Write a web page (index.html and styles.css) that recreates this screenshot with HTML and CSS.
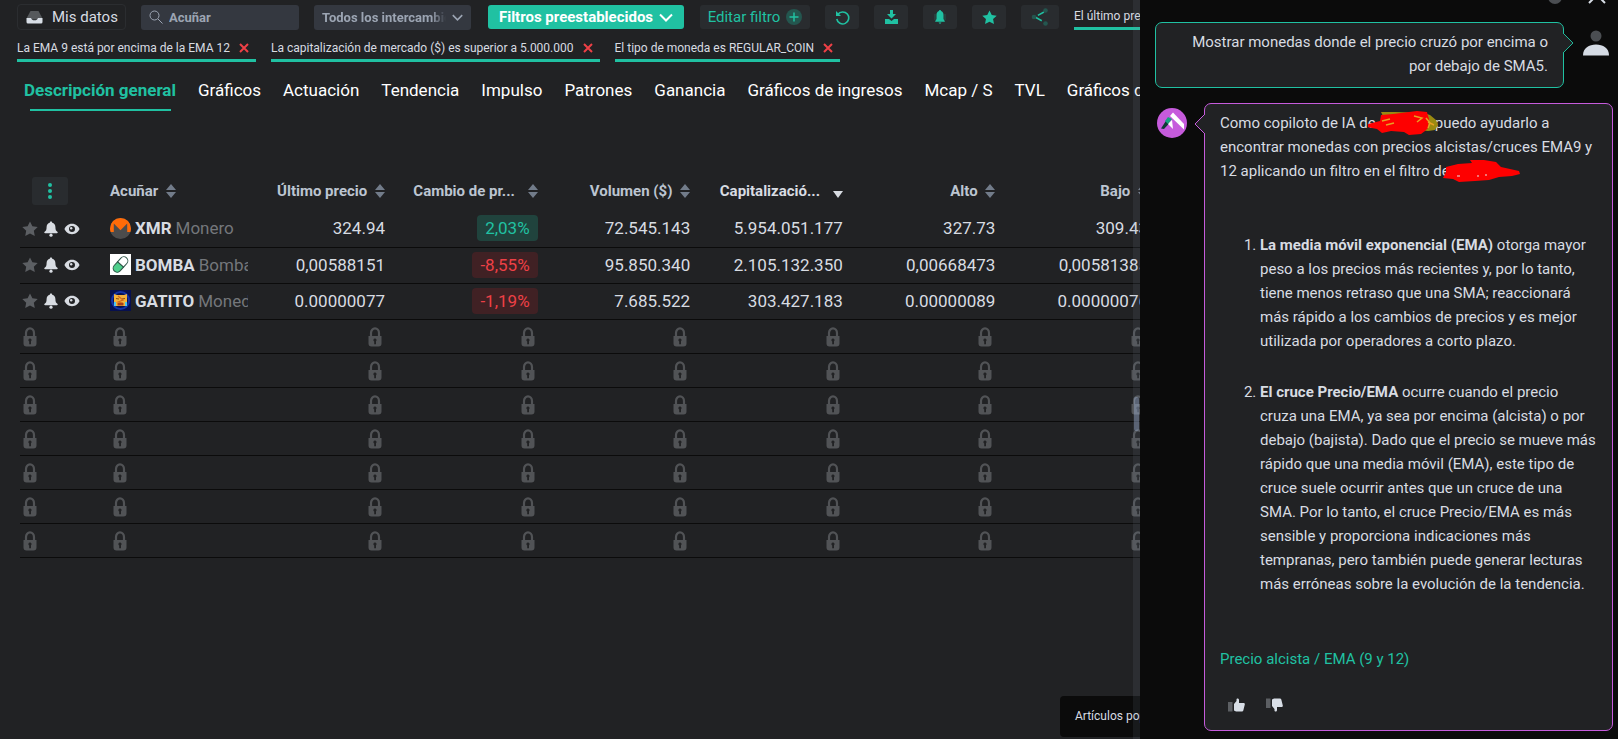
FILE: index.html
```
<!DOCTYPE html>
<html lang="es">
<head>
  <meta charset="UTF-8" />
  <meta name="viewport" content="width=device-width, initial-scale=1.0"/>
  <title>Filtro de criptomonedas</title>
  <link rel="stylesheet" href="styles.css">
</head>
<body>

  <!-- Shared icons -->
  <svg class="sprite" aria-hidden="true">
    <symbol id="i-x" viewBox="0 0 10 10"><path d="M1 1l8 8M9 1l-8 8" stroke="currentColor" stroke-width="2" fill="none"/></symbol>
    <symbol id="i-down" viewBox="0 0 14 8"><path d="M1 1l6 6 6-6" stroke="currentColor" stroke-width="2" fill="none"/></symbol>
    <symbol id="i-star" viewBox="0 0 16 16"><path d="M8 .5l2.400 4.800 5.300.7-3.900 3.700 1 5.300L8 12.400 3.200 15l1-5.300L.3 6l5.300-.7z" fill="currentColor"/></symbol>
    <symbol id="i-bell" viewBox="0 0 14 16"><path d="M7 0.500c.8 0 1.200.5 1.200 1.200 2 .5 3.200 2.200 3.200 4.300 0 3 .6 3.800 2 4.800.6.500.4 1.400-.5 1.400H1.100c-.9 0-1.100-.9-.5-1.400 1.400-1 2-1.800 2-4.800 0-2.100 1.200-3.800 3.200-4.300C5.800 1 6.200.5 7 .5z" fill="currentColor"/><circle cx="7" cy="14.200" r="1.600" fill="currentColor"/></symbol>
    <symbol id="i-eye" viewBox="0 0 16 12"><path d="M8 .8C4 .8 1.500 3.500.5 6c1 2.500 3.500 5.200 7.500 5.200s6.500-2.700 7.500-5.200C14.500 3.500 12 .8 8 .8zM8 9a3 3 0 1 1 0-6 3 3 0 0 1 0 6z" fill="currentColor" fill-rule="evenodd"/><circle cx="7.200" cy="5.200" r="1.200" fill="currentColor"/></symbol>
    <symbol id="i-sort" viewBox="0 0 10 14"><path d="M5 0l5 6H0zM5 14l5-6H0z" fill="currentColor"/></symbol>
    <symbol id="i-lock" viewBox="0 0 14 20"><path d="M3 10V6a4 4.700 0 0 1 8 0v4" stroke="currentColor" stroke-width="2.200" fill="none"/><path d="M.5 9h13v7.500a3 3 0 0 1-3 3h-7a3 3 0 0 1-3-3zM7 11.500a1.600 1.600 0 0 0-.8 3v2.800h1.800v-3a1.600 1.600 0 0 0-1-2.800z" fill="currentColor" fill-rule="evenodd"/></symbol>
  </svg>

  <main class="screener">
    <div class="toolbar">
      <button class="my-data">
        <svg width="17" height="14" viewBox="0 0 17 14"><path d="M4.500 1h8L16 7.500v2H1v-2z" fill="#56595c"/><path d="M.5 8H5c.6 1.500 1.500 2.300 3.500 2.300S11.400 9.500 12 8h4.500v4a1.500 1.500 0 0 1-1.500 1.500H2A1.500 1.500 0 0 1 .5 12z" fill="#d8dee6"/></svg>
        Mis datos
      </button>
      <label class="search">
        <svg width="14" height="14" viewBox="0 0 14 14"><circle cx="5.500" cy="5.500" r="4.500" stroke="currentColor" fill="none"/><path d="M9 9l4.500 4.500" stroke="currentColor"/></svg>
        <input type="text" placeholder="Acuñar" aria-label="Acuñar">
      </label>
      <div class="exchange">
        <select aria-label="Intercambios"><option>Todos los intercambios</option></select>
        <svg width="11" height="7"><use href="#i-down"/></svg>
      </div>
      <button class="preset">Filtros preestablecidos <svg width="14" height="9"><use href="#i-down"/></svg></button>
      <button class="tool edit">Editar filtro
        <svg width="16" height="16" viewBox="0 0 16 16"><circle cx="8" cy="8" r="8" fill="#24564f"/><path d="M8 3.500v9M3.500 8h9" stroke="currentColor" stroke-width="1.500"/></svg>
      </button>
      <button class="tool" aria-label="Restablecer"><svg width="15" height="15" viewBox="0 0 15 15"><path d="M2.800 4.500A6 6 0 1 1 1.800 9" stroke="currentColor" stroke-width="1.600" fill="none"/><path d="M1 1v5h5z" fill="currentColor"/></svg></button>
      <button class="tool" aria-label="Descargar"><svg width="13" height="14" viewBox="0 0 13 14"><path d="M5 0h3v4h3L6.500 8.500 2 4h3z" fill="currentColor"/><path d="M0 9h4l2.500 2L9 9h4v5H0z" fill="currentColor"/></svg></button>
      <button class="tool" aria-label="Alertas"><svg width="12" height="14" viewBox="0 0 12 14"><path d="M6 0c.6 0 1 .5 1 1 1.600.5 2.500 2 2.500 4v4l1.300 2.200v.6H1.200v-.6L2.500 9V5c0-2 .9-3.500 2.500-4 0-.5.400-1 1-1z" fill="currentColor"/><path d="M1 4v6M11 4v6" stroke="#24564f"/><path d="M4.500 12.500h3L6 14z" fill="currentColor"/></svg></button>
      <button class="tool" aria-label="Favoritos"><svg width="15" height="15"><use href="#i-star"/></svg></button>
      <button class="tool share" aria-label="Compartir"><svg width="18" height="18" viewBox="0 0 18 18"><path d="M13 4L4 9l9 5" stroke="currentColor" stroke-width="1.500" stroke-dasharray="7 3 8" fill="none"/><g fill="#24564f"><circle cx="3" cy="9" r="2.300"/><circle cx="14.500" cy="2.500" r="2.300"/><circle cx="14.500" cy="15.500" r="2.300"/></g></svg></button>
      <div class="chip chip-top">El último precio</div>
    </div>

    <div class="chips">
      <div class="chip">La EMA 9 está por encima de la EMA 12 <button aria-label="Quitar"><svg width="10" height="10"><use href="#i-x"/></svg></button></div>
      <div class="chip">La capitalización de mercado ($) es superior a 5.000.000 <button aria-label="Quitar"><svg width="10" height="10"><use href="#i-x"/></svg></button></div>
      <div class="chip">El tipo de moneda es REGULAR_COIN <button aria-label="Quitar"><svg width="10" height="10"><use href="#i-x"/></svg></button></div>
    </div>

    <nav class="tabs">
      <a href="#" class="active">Descripción general</a>
      <a href="#">Gráficos</a>
      <a href="#">Actuación</a>
      <a href="#">Tendencia</a>
      <a href="#">Impulso</a>
      <a href="#">Patrones</a>
      <a href="#">Ganancia</a>
      <a href="#">Gráficos de ingresos</a>
      <a href="#">Mcap / S</a>
      <a href="#">TVL</a>
      <a href="#">Gráficos de</a>
    </nav>

    <div class="table-wrap">
      <table>
        <colgroup><col class="col-actions"><col class="col-coin"><col class="col-price"><col><col><col><col><col></colgroup>
        <thead>
          <tr>
            <th><button class="menu" aria-label="Columnas"><svg width="4" height="16" viewBox="0 0 4 16" fill="currentColor"><circle cx="2" cy="2" r="2"/><circle cx="2" cy="8" r="2"/><circle cx="2" cy="14" r="2"/></svg></button></th>
            <th class="left">Acuñar <svg width="10" height="14"><use href="#i-sort"/></svg></th>
            <th>Último precio <svg width="10" height="14"><use href="#i-sort"/></svg></th>
            <th class="cut">Cambio de pr... <svg width="10" height="14"><use href="#i-sort"/></svg></th>
            <th>Volumen ($) <svg width="10" height="14"><use href="#i-sort"/></svg></th>
            <th class="cut sorted">Capitalizació... <svg width="10" height="14" viewBox="0 0 10 14"><path d="M0 7h10l-5 7z" fill="currentColor"/></svg></th>
            <th>Alto <svg width="10" height="14"><use href="#i-sort"/></svg></th>
            <th>Bajo <svg width="10" height="14"><use href="#i-sort"/></svg></th>
          </tr>
        </thead>
        <tbody id="rows">
          <tr>
            <td><div class="actions"><svg class="dim" width="16" height="16"><use href="#i-star"/></svg><svg width="14" height="16"><use href="#i-bell"/></svg><svg width="16" height="12"><use href="#i-eye"/></svg></div></td>
            <td><div class="coin">
              <svg width="21" height="21" viewBox="0 0 21 21"><circle cx="10.500" cy="10.500" r="10.500" fill="#4c4c4c"/><path d="M0 10.500a10.500 10.500 0 0 1 21 0 11 11 0 0 1-.6 3.500h-3.200V5.500l-6.700 6.700-6.700-6.700V14H.6A11 11 0 0 1 0 10.500z" fill="#ff6b08"/></svg>
              <b>XMR</b> <span>Monero</span></div></td>
            <td>324.94</td>
            <td><span class="badge up">2,03%</span></td>
            <td>72.545.143</td>
            <td>5.954.051.177</td>
            <td>327.73</td>
            <td>309.43</td>
          </tr>
          <tr>
            <td><div class="actions"><svg class="dim" width="16" height="16"><use href="#i-star"/></svg><svg width="14" height="16"><use href="#i-bell"/></svg><svg width="16" height="12"><use href="#i-eye"/></svg></div></td>
            <td><div class="coin">
              <svg width="21" height="21" viewBox="0 0 21 21"><path d="M0 0h21v21H0z" fill="#fff"/><g transform="rotate(42 10.500 10.500)" stroke="#2f5548"><path d="M6.500 10.500v-5a4 4 0 0 1 8 0v5z" fill="#fff"/><path d="M6.500 10.500v5a4 4 0 0 0 8 0v-5z" fill="#4fcf8c"/></g></svg>
              <b>BOMBA</b> <span>Bomba</span></div></td>
            <td>0,00588151</td>
            <td><span class="badge down">-8,55%</span></td>
            <td>95.850.340</td>
            <td>2.105.132.350</td>
            <td>0,00668473</td>
            <td>0,00581385</td>
          </tr>
          <tr>
            <td><div class="actions"><svg class="dim" width="16" height="16"><use href="#i-star"/></svg><svg width="14" height="16"><use href="#i-bell"/></svg><svg width="16" height="12"><use href="#i-eye"/></svg></div></td>
            <td><div class="coin">
              <svg width="21" height="21" viewBox="0 0 21 21"><path d="M0 0h21v21H0z" fill="#07104f"/><circle cx="10.500" cy="10.500" r="8.500" fill="none" stroke="#1433a8" stroke-width="2"/><path d="M4 4l3 1h7l3-1v8l-1.500 4h-10L4 12z" fill="#f3b13c"/><path d="M6 8.500l3 .5M15 8.500l-3 .5" stroke="#8a4a12" stroke-width="1.200"/><path d="M8 6l5 4-5 2 5 1" stroke="#d4661c" stroke-width="1.200" fill="none"/><path d="M7.500 13h6v2.500h-6z" fill="#a8401b"/><path d="M4 12h2v4H4zM15 12h2v4h-2z" fill="#4fc4ec"/></svg>
              <b>GATITO</b> <span>Moneda</span></div></td>
            <td>0.00000077</td>
            <td><span class="badge down">-1,19%</span></td>
            <td>7.685.522</td>
            <td>303.427.183</td>
            <td>0.00000089</td>
            <td>0.00000076</td>
          </tr>
        </tbody>
      </table>
    </div>

    <div class="popular">Artículos populares</div>
    <div class="resizer"><span></span></div>
  </main>

  <aside class="chat">
    <div class="chat-top">
      <svg width="14" height="14" viewBox="0 0 14 14"><circle cx="7" cy="7" r="7" fill="#4b4e52"/></svg>
      <svg width="18" height="18" viewBox="0 0 18 18"><path d="M1 1l16 16M17 1L1 17" stroke="#d8dee6" stroke-width="2"/></svg>
    </div>

    <div class="message user">
      <div class="bubble">
        <p>Mostrar monedas donde el precio cruzó por encima o por debajo de SMA5.</p>
        <svg class="tip" width="11" height="20" viewBox="0 0 11 20"><path d="M0 0l10 10L0 20" fill="#212224" stroke="#20b899"/></svg>
      </div>
      <svg class="avatar" width="26" height="26" viewBox="0 0 26 26"><circle cx="13" cy="6" r="5.500" fill="#4b4e52"/><path d="M0 25.500C0 18 6 14.500 13 14.500s13 3.500 13 11z" fill="#d5dbe4"/></svg>
    </div>

    <div class="message bot">
      <svg class="avatar" width="30" height="30" viewBox="0 0 30 30"><circle cx="15" cy="15" r="15" fill="#c65bdc"/><path d="M4 20.500L9.500 12l3 3-5.500 6z" fill="#0e3b34"/><path d="M8 13l3-4 4 2-4 5z" fill="#15a37f"/><path d="M11 16l4-4 1 9z" fill="#fff"/><path d="M13 8l3-3.500L27 16v5.500z" fill="#fff"/></svg>
      <div class="bubble">
        <svg class="tip" width="11" height="20" viewBox="0 0 11 20"><path d="M11 0L1 10l10 10" fill="#212224" stroke="#c65bdc"/></svg>
        <p>Como copiloto de IA de<span class="mark"><svg width="72" height="26" viewBox="0 0 72 26"><path d="M13 2h15l28 1 6 2 6 5 2 5-3 5-7 1-10-1-9 2-14-2-8-6z" fill="#9a8a10"/><path d="M0 14l12-3 1-6 12-1 24-3 10 1 1 4 1 3-1 9-2 2-1 1-4 3-12 1-5-3-13-1-9 2-5-4-11-2z" fill="#fe0000"/><path d="M46 6l8 2-5 4M58 8l4 5-2 5M60 12l6 3M14 11l8-2M18 15l8-2" stroke="#e8a022" stroke-width="1.500" fill="none"/></svg></span>puedo ayudarlo a encontrar monedas con precios alcistas/cruces EMA9 y 12 aplicando un filtro en el filtro de<span class="mark end"><svg width="78" height="24" viewBox="0 0 78 24"><path d="M1 19l3-6 0-5 12-3 14-1-2-3 14 0 12 2 5 5 18 4 1 3-8 2-13 1-10 3-14 1-16 1-6-3z" fill="#fe0000"/><path d="M35 17h2M43 16h2M15 17h3" stroke="#e6e6e6"/></svg></span></p>
        <ol>
          <li><b>La media móvil exponencial (EMA)</b> otorga mayor peso a los precios más recientes y, por lo tanto, tiene menos retraso que una SMA; reaccionará más rápido a los cambios de precios y es mejor utilizada por operadores a corto plazo.</li>
          <li><b>El cruce Precio/EMA</b> ocurre cuando el precio cruza una EMA, ya sea por encima (alcista) o por debajo (bajista). Dado que el precio se mueve más rápido que una media móvil (EMA), este tipo de cruce suele ocurrir antes que un cruce de una SMA. Por lo tanto, el cruce Precio/EMA es más sensible y proporciona indicaciones más tempranas, pero también puede generar lecturas más erróneas sobre la evolución de la tendencia.</li>
        </ol>
        <a href="#">Precio alcista / EMA (9 y 12)</a>
        <div class="votes">
          <button aria-label="Me gusta"><svg width="17" height="14" viewBox="0 0 17 14"><path d="M0 4h4.500v9.500H0z" fill="#5c5f63"/><path d="M6 6l2.500-3V1.500C8.500 0 11 0 11 2v3h4.500c1 0 1.500.7 1.300 1.500l-1.500 6c-.2.700-.6 1-1.300 1H8l-2-1z" fill="#d8dee6"/></svg></button>
          <button aria-label="No me gusta"><svg width="17" height="14" viewBox="0 0 17 14"><path d="M0 .5h4.500V10H0z" fill="#5c5f63"/><path d="M6 8l2.500 3v1.500c0 1.500 2.500 1.500 2.500-.5V9h4.500c1 0 1.500-.7 1.300-1.500l-1.500-6c-.2-.7-.6-1-1.300-1H8l-2 1z" fill="#d8dee6"/></svg></button>
        </div>
      </div>
    </div>
  </aside>

  <script>
    // Locked rows for the free plan
    const rows = document.getElementById('rows');
    const lock = '<td><svg class="lock" width="14" height="20"><use href="#i-lock"/></svg></td>';

    for (let i = 0; i < 7; i++) {
      const tr = document.createElement('tr');
      tr.className = 'locked';
      tr.innerHTML = lock.repeat(8);
      rows.appendChild(tr);
    }
  </script>

</body>
</html>
```
FILE: styles.css
```
:root {
  --bg: #212224;
  --dark: #0b0b0b;
  --panel: #292c2f;
  --field: #343840;
  --green: #20c1a2;
  --purple: #c65bdc;
  --red: #ee4046;
  --text: #d8dce2;
  --muted: #9ca5b3;
}

* {
  margin: 0;
  padding: 0;
  box-sizing: border-box;
}

body {
  display: flex;
  height: 100vh;
  overflow: hidden;
  background-color: var(--dark);
  color: var(--text);
  font-family: Roboto, sans-serif;
  font-size: 15px;
}

button, input, select {
  font: inherit;
  color: inherit;
  background: none;
  border: none;
}

button {
  cursor: pointer;
}

a {
  text-decoration: none;
}

svg {
  flex-shrink: 0;
}

.sprite {
  position: absolute;
  width: 0;
  height: 0;
}

.screener {
  position: relative;
  flex: 1;
  min-width: 0;
  overflow: hidden;
  background-color: var(--bg);
}

/* Toolbar */
.toolbar {
  display: flex;
  align-items: center;
  gap: 15px;
  padding: 4px 0 0 17px;
  height: 30px;
  white-space: nowrap;
}

.toolbar > * {
  flex-shrink: 0;
}

.my-data {
  display: flex;
  align-items: center;
  gap: 9px;
  width: 109px;
  height: 26px;
  padding-left: 8px;
  border: 1px solid #2b2d30;
  border-radius: 4px;
}

.search,
.exchange {
  display: flex;
  align-items: center;
  width: 158px;
  height: 25px;
  padding: 0 8px;
  background-color: var(--field);
  border-radius: 3px;
  color: var(--muted);
  font-size: 13px;
  font-weight: bold;
}

.search {
  gap: 6px;
}

.search input {
  width: 100%;
}

.search input::placeholder {
  color: var(--muted);
  opacity: 1;
}

.exchange {
  gap: 6px;
  width: 157px;
}

.exchange select {
  appearance: none;
  width: 124px;
  overflow: hidden;
  mask-image: linear-gradient(90deg, #000 88%, transparent);
}

.preset {
  display: flex;
  align-items: center;
  justify-content: center;
  gap: 6px;
  width: 196px;
  height: 24px;
  margin-left: 2px;
  background-color: var(--green);
  border-radius: 3px;
  color: white;
  font-weight: bold;
}

.tool {
  display: flex;
  align-items: center;
  justify-content: center;
  width: 34px;
  height: 24px;
  background-color: var(--panel);
  border-radius: 3px;
  color: var(--green);
}

.edit {
  gap: 6px;
  width: 110px;
  margin-left: 1px;
}

.share {
  width: 38px;
}

.chips {
  display: flex;
  gap: 15px;
  padding: 8px 0 0 17px;
}

.chip {
  display: flex;
  align-items: center;
  height: 24px;
  padding: 0 7px 2px 0;
  gap: 9px;
  border-bottom: 3px solid var(--green);
  font-size: 12px;
  white-space: nowrap;
}

.chip-top {
  align-self: flex-end;
}

.chip button {
  display: flex;
  color: var(--red);
}

/* Tabs */
.tabs {
  display: flex;
  gap: 22px;
  padding: 18px 0 0 24px;
  white-space: nowrap;
}

.tabs a {
  position: relative;
  height: 31px;
  line-height: 20px;
  color: white;
  font-size: 17px;
}

.tabs a.active {
  color: var(--green);
  font-weight: bold;
}

.tabs a.active::after {
  content: "";
  position: absolute;
  left: 6px;
  right: 5px;
  bottom: 0;
  height: 2px;
  background-color: var(--green);
}

/* Table */
.table-wrap {
  padding: 60px 0 0 20px;
}

table {
  width: calc(100% + 13px);
  table-layout: fixed;
  border-collapse: collapse;
}

.col-actions {
  width: 85px;
}

.col-coin {
  width: 148px;
}

.col-price {
  width: 137px;
}

th {
  height: 40px;
  padding: 0 5px;
  color: #bcc5d1;
  font-size: 15px;
  text-align: right;
  white-space: nowrap;
}

th svg {
  margin-left: 4px;
  vertical-align: -2px;
  color: #727c8a;
}

th.left {
  text-align: left;
}

th.cut svg {
  margin-left: 9px;
}

th.sorted,
th.sorted svg {
  color: var(--text);
}

.menu {
  display: flex;
  align-items: center;
  justify-content: center;
  width: 36px;
  height: 28px;
  margin-left: 7px;
  background-color: var(--panel);
  border-radius: 3px;
}

.menu svg {
  margin: 0;
  color: var(--green);
}

td {
  height: 36px;
  padding: 0 5px 1px;
  border-bottom: 1px solid var(--dark);
  font-size: 17px;
  text-align: right;
  white-space: nowrap;
}

td:first-child {
  padding: 0 2px;
}

.actions {
  display: flex;
  align-items: center;
  gap: 6px;
}

.actions .dim {
  color: #5c5f63;
}

.coin {
  display: flex;
  align-items: center;
  gap: 4px;
  overflow: hidden;
}

.coin span {
  color: #74777b;
}

.badge {
  display: inline-block;
  height: 26px;
  padding: 0 8px;
  border-radius: 4px;
  line-height: 26px;
}

.badge.up {
  background-color: #20433d;
  color: var(--green);
}

.badge.down {
  background-color: #402124;
  color: var(--red);
}

.locked td {
  height: 34px;
  padding: 0 8px;
}

.locked td:first-child {
  padding: 0 3px;
}

.locked td:nth-child(-n+2) {
  text-align: left;
}

.lock {
  display: inline-block;
  vertical-align: middle;
  color: #515356;
}

/* Overlays on the table */
.popular {
  position: absolute;
  bottom: 2px;
  right: -60px;
  width: 140px;
  height: 41px;
  padding-left: 15px;
  background-color: var(--dark);
  border-radius: 4px;
  font-size: 12px;
  line-height: 41px;
  white-space: nowrap;
}

.resizer {
  position: absolute;
  top: 0;
  right: 0;
  bottom: 0;
  display: flex;
  align-items: center;
  width: 7px;
  padding: 88px 1px 0;
  background-color: rgba(120, 140, 160, 0.12);
}

.resizer span {
  width: 5px;
  height: 34px;
  border-radius: 2px;
  background-color: rgba(160, 180, 215, 0.4);
}

/* Copilot chat */
.chat {
  flex: 0 0 478px;
  height: 100%;
  padding: 0 5px 0 15px;
  overflow: hidden;
  line-height: 24px;
}

.chat-top {
  display: flex;
  justify-content: flex-end;
  align-items: flex-end;
  gap: 26px;
  height: 4px;
  padding-right: 7px;
}

.message {
  display: flex;
  align-items: flex-start;
}

.user {
  margin-top: 18px;
  gap: 19px;
}

.bot {
  margin-top: 15px;
  padding-left: 2px;
  gap: 17px;
}

.bubble {
  position: relative;
  flex: 1;
  padding: 7px 15px 9px;
  background-color: var(--bg);
  border: 1px solid var(--green);
  border-radius: 7px;
}

.user .bubble {
  text-align: right;
}

.user .avatar {
  margin: 8px 4px 0 0;
}

.user .tip {
  position: absolute;
  top: 10px;
  right: -11px;
}

.bot .bubble {
  border-color: var(--purple);
}

.bot .avatar {
  margin-top: 5px;
}

.bot .tip {
  position: absolute;
  top: 10px;
  left: -11px;
}

.mark {
  position: relative;
  display: inline-block;
  width: 59px;
}

.mark svg {
  position: absolute;
  left: -8px;
  bottom: -8px;
}

.mark.end svg {
  bottom: -7px;
}

ol {
  margin-top: 50px;
  padding-left: 40px;
}

li + li {
  margin-top: 27px;
}

.bubble > a {
  display: block;
  margin-top: 51px;
  color: var(--green);
}

.votes {
  display: flex;
  gap: 21px;
  margin-top: 27px;
  padding: 0 8px 9px;
}

.votes button {
  display: flex;
}
```
